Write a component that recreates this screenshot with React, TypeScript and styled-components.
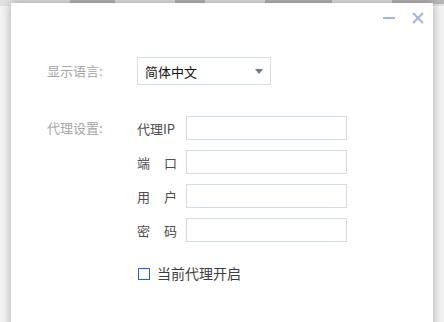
import { FC } from 'react';
import styled, { createGlobalStyle } from 'styled-components';

const GlobalStyle = createGlobalStyle`
  html, body {
    margin: 0;
    padding: 0;
    background: #f3f3f3;
    font-family: "Noto Sans CJK SC", "Noto Sans", sans-serif;
    overflow: hidden;
  }
`;

const proxyFields = [
  { key: 'ip', label: '代理IP', spread: false },
  { key: 'port', label: '端口', spread: true },
  { key: 'user', label: '用户', spread: true },
  { key: 'pass', label: '密码', spread: true },
];

const App: FC = () => {
  return (
    <>
      <GlobalStyle />
      <Desktop>
        <TopStrip>
          <Ghost w={60} />
          <Ghost w={40} />
          <Ghost w={90} />
          <Ghost w={70} />
        </TopStrip>
        <Dialog>
          <Header>
            <IconButton aria-label="minimize">
              <svg width="14" height="14" viewBox="0 0 14 14">
                <path d="M1 7h12" stroke="#a7b4dc" strokeWidth="2" />
              </svg>
            </IconButton>
            <IconButton aria-label="close">
              <svg width="14" height="14" viewBox="0 0 14 14">
                <path d="M2 2l10 10M12 2L2 12" stroke="#a7b4dc" strokeWidth="2" />
              </svg>
            </IconButton>
          </Header>

          <Row>
            <MainLabel>显示语言:</MainLabel>
            <Select>
              <span>简体中文</span>
              <Caret />
            </Select>
          </Row>

          <ProxyRow>
            <MainLabel>代理设置:</MainLabel>
            <FieldList>
              {proxyFields.map((f) => (
                <Field key={f.key}>
                  <SubLabel spread={f.spread}>{f.label}</SubLabel>
                  <TextInput type={f.key === 'pass' ? 'password' : 'text'} />
                </Field>
              ))}
            </FieldList>
          </ProxyRow>

          <CheckRow>
            <CheckBox />
            <CheckText>当前代理开启</CheckText>
          </CheckRow>
        </Dialog>
      </Desktop>
    </>
  );
};

export default App;

const Desktop = styled.div`
  position: relative;
  width: 444px;
  height: 322px;
  overflow: hidden;
  background: #f3f3f3;
`;

const TopStrip = styled.div`
  display: flex;
  gap: 60px;
  height: 6px;
  padding-left: 70px;
  background: #e2e2e2;
`;

const Ghost = styled.div<{ w: number }>`
  width: ${(p) => p.w}px;
  height: 4px;
  background: #9a9a9a;
  opacity: 0.6;
`;

const Dialog = styled.div`
  position: absolute;
  left: 11px;
  top: 3px;
  width: 422px;
  height: 340px;
  box-sizing: border-box;
  background: #fff;
  box-shadow: 0 0 9px rgba(0, 0, 0, 0.32);
  padding: 0 0 0 36px;
`;

const Header = styled.div`
  display: flex;
  justify-content: flex-end;
  align-items: center;
  gap: 15px;
  height: 28px;
  padding: 0 8px 0 0;
  margin-top: 1px;
  margin-bottom: 25px;
`;

const IconButton = styled.span`
  display: flex;
  width: 14px;
  height: 14px;
  cursor: pointer;
`;

const Row = styled.div`
  display: flex;
  align-items: center;
`;

const MainLabel = styled.div`
  width: 90px;
  font-size: 13px;
  color: #a6a6a6;
  line-height: 24px;
`;

const Select = styled.div`
  display: flex;
  align-items: center;
  justify-content: space-between;
  width: 134px;
  height: 28px;
  box-sizing: border-box;
  border: 1px solid #d6dee6;
  padding: 0 7px 0 7px;
  font-size: 13px;
  color: #111;
`;

const Caret = styled.span`
  width: 0;
  height: 0;
  border-left: 4px solid transparent;
  border-right: 4px solid transparent;
  border-top: 5px solid #6b7c8e;
`;

const ProxyRow = styled.div`
  display: flex;
  align-items: flex-start;
  margin-top: 31px;
`;

const FieldList = styled.div`
  display: flex;
  flex-direction: column;
  gap: 10px;
`;

const Field = styled.div`
  display: flex;
  align-items: center;
`;

const SubLabel = styled.span<{ spread: boolean }>`
  width: 49px;
  font-size: 13px;
  color: #4d4d4d;
  letter-spacing: ${(p) => (p.spread ? '14px' : '0')};
  white-space: nowrap;
`;

const TextInput = styled.input`
  width: 161px;
  height: 24px;
  box-sizing: border-box;
  border: 1px solid #d3dbe4;
  outline: none;
  margin: 0;
  padding: 0 6px;
`;

const CheckRow = styled.div`
  display: flex;
  align-items: center;
  gap: 7px;
  margin-top: 21px;
  padding-left: 91px;
  height: 20px;
`;

const CheckBox = styled.span`
  width: 12px;
  height: 12px;
  box-sizing: border-box;
  border: 1px solid #2b5fe3;
  margin-top: 2px;
`;

const CheckText = styled.span`
  font-size: 14px;
  color: #3d3d3d;
`;
